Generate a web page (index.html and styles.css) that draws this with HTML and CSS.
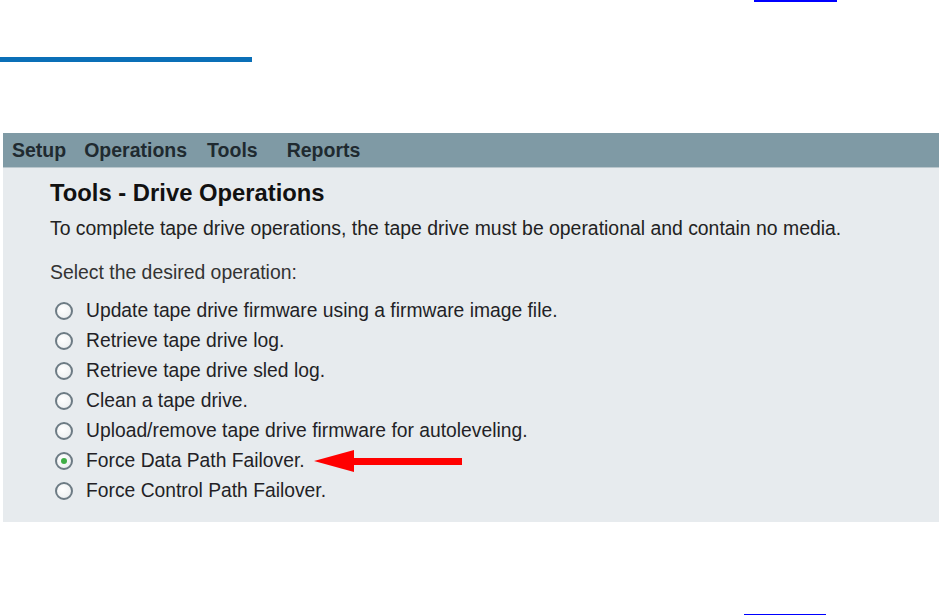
FILE: index.html
```html
<!DOCTYPE html>
<html>
<head>
<meta charset="utf-8">
<link rel="stylesheet" href="styles.css">
</head>
<body>
<div class="top-link"></div>
<div class="section-bar"></div>
<div class="panel">
  <div class="nav">
    <span class="nav-item nav-setup">Setup</span>
    <span class="nav-item nav-ops">Operations</span>
    <span class="nav-item nav-tools">Tools</span>
    <span class="nav-item nav-reports">Reports</span>
  </div>
  <div class="content">
    <h1 class="title">Tools - Drive Operations</h1>
    <p class="desc">To complete tape drive operations, the tape drive must be operational and contain no media.</p>
    <p class="prompt">Select the desired operation:</p>
    <ul class="options">
      <li class="option"><span class="radio"></span><span class="label">Update tape drive firmware using a firmware image file.</span></li>
      <li class="option"><span class="radio"></span><span class="label">Retrieve tape drive log.</span></li>
      <li class="option"><span class="radio"></span><span class="label">Retrieve tape drive sled log.</span></li>
      <li class="option"><span class="radio"></span><span class="label">Clean a tape drive.</span></li>
      <li class="option"><span class="radio"></span><span class="label">Upload/remove tape drive firmware for autoleveling.</span></li>
      <li class="option"><span class="radio checked"></span><span class="label">Force Data Path Failover.</span>
        <svg class="arrow" width="148" height="22" viewBox="0 0 148 22"><polygon points="0,11 40,0 40,22" fill="#ff0000"/><rect x="39" y="8" width="109" height="7" fill="#ff0000"/></svg>
      </li>
      <li class="option"><span class="radio"></span><span class="label">Force Control Path Failover.</span></li>
    </ul>
  </div>
</div>
<div class="bottom-link"></div>
</body>
</html>
```
FILE: styles.css
```css
html, body {
  margin: 0;
  padding: 0;
  background: #ffffff;
}
body {
  width: 941px;
  height: 615px;
  overflow: hidden;
  font-family: "Liberation Sans", Arial, sans-serif;
}
.top-link {
  margin-left: 754px;
  width: 83px;
  height: 2px;
  background: #0000ff;
}
.section-bar {
  margin-top: 55px;
  width: 252px;
  height: 5px;
  background: #0a6fb7;
}
.panel {
  margin-top: 71px;
  margin-left: 3px;
  width: 936px;
  height: 389px;
  background: #e7ebee;
  box-sizing: border-box;
}
.nav {
  height: 35px;
  background: #7f9aa5;
  display: flex;
  align-items: center;
  border-bottom: 1px solid #b9c6cc;
  box-sizing: border-box;
}
.nav-item {
  font-weight: bold;
  font-size: 19.5px;
  color: #1f2a30;
}
.nav-setup { margin-left: 9px; }
.nav-ops { margin-left: 18px; }
.nav-tools { margin-left: 20px; }
.nav-reports { margin-left: 29px; }
.content {
  padding-left: 47px;
  padding-top: 11px;
}
.title {
  margin: 0;
  font-size: 23.8px;
  font-weight: bold;
  color: #111111;
  line-height: 28px;
}
.desc {
  margin: 10px 0 0 0;
  font-size: 19.4px;
  color: #222222;
  line-height: 22px;
}
.prompt {
  margin: 22px 0 0 0;
  font-size: 19.4px;
  color: #333333;
  line-height: 22px;
}
.options {
  list-style: none;
  margin: 13px 0 0 0;
  padding: 0;
}
.option {
  display: flex;
  align-items: center;
  height: 30px;
  font-size: 19.3px;
  color: #231f26;
}
.radio {
  width: 18px;
  height: 18px;
  box-sizing: border-box;
  border: 2px solid #6d7b84;
  border-radius: 50%;
  background: radial-gradient(circle at 40% 35%, #ffffff 0%, #f2f4f5 60%, #dde2e5 100%);
  margin-left: 5px;
  margin-right: 13px;
  display: flex;
  align-items: center;
  justify-content: center;
}
.radio.checked::after {
  content: "";
  width: 6px;
  height: 6px;
  border-radius: 50%;
  background: #3fae46;
}
.arrow {
  margin-left: 9px;
  display: block;
}
.bottom-link {
  margin-top: 92px;
  margin-left: 744px;
  width: 82px;
  height: 1px;
  background: #0000ff;
}
```
